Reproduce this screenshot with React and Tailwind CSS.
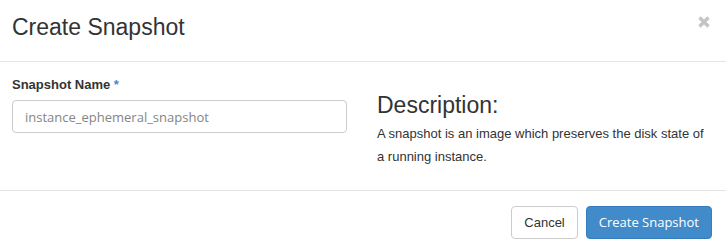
export default function App() {
  return (
    <div className="w-[726px] h-[250px] bg-white text-[#333] font-['Liberation_Sans',Arial,sans-serif]">
      {/* HEADER */}
      <div className="h-[62px] border-b border-[#e5e5e5] flex items-start justify-between pl-3 pr-[15px] pt-[15px]">
        <h3 className="text-[23px] leading-[1.1] font-normal text-[#333]">Create Snapshot</h3>
        <button className="mt-0 w-[14px] h-[14px] flex items-center justify-center" aria-label="Close">
          <svg width="12" height="12" viewBox="0 0 12 12">
            <path d="M1.5 1.5 L10.5 10.5 M10.5 1.5 L1.5 10.5" stroke="#c4c4c4" strokeWidth="3.4" strokeLinecap="butt" />
          </svg>
        </button>
      </div>

      {/* BODY */}
      <div className="h-[128px] grid grid-cols-[335px_1fr] gap-[30px] px-3">
        <div className="pt-[14px]">
          <label className="block text-[13px] leading-[18px] font-bold text-[#333]">
            Snapshot Name <span className="text-[#428bca]">*</span>
          </label>
          <input
            type="text"
            defaultValue="instance_ephemeral_snapshot"
            className="mt-[6px] w-full h-[33px] border border-[#ccc] rounded-[4px] px-3 text-[13px] text-[#858585] font-['Open_Sans',sans-serif] outline-none"
          />
        </div>
        <div className="pt-[31px]">
          <h3 className="text-[23px] leading-[1.1] font-normal text-[#333]">Description:</h3>
          <p className="mt-[4px] text-[13px] leading-[23px] text-[#333]">
            A snapshot is an image which preserves the disk state of a running instance.
          </p>
        </div>
      </div>

      {/* FOOTER */}
      <div className="h-[60px] border-t border-[#e5e5e5] flex items-start justify-end gap-2 pt-[15px] pr-[14px]">
        <button className="h-[33px] px-3 border border-[#ccc] rounded-[4px] bg-white text-[13px] text-[#333]">
          Cancel
        </button>
        <button className="h-[33px] px-3 border border-[#357ebd] rounded-[4px] bg-[#428bca] text-[13px] text-white font-['Open_Sans',sans-serif]">
          Create Snapshot
        </button>
      </div>
    </div>
  );
}
